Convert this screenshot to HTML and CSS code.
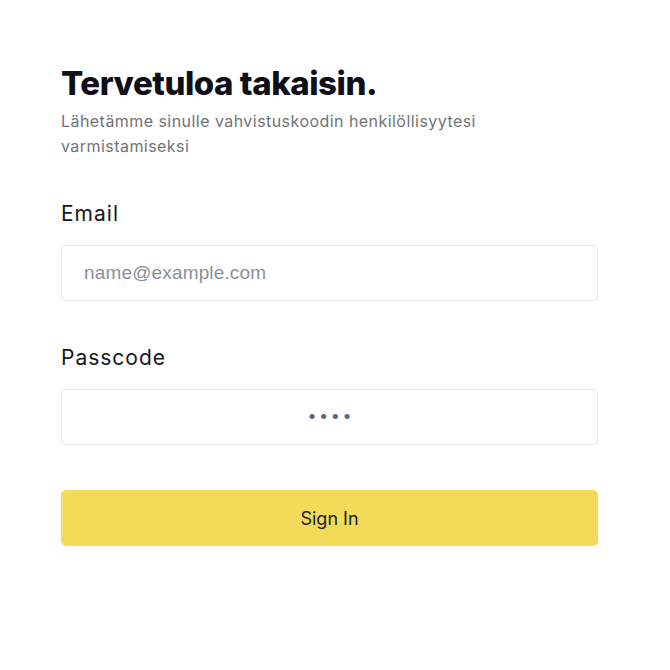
FILE: index.html
```html
<!DOCTYPE html>
<html lang="fi">
<head>
    <meta charset="UTF-8">
    <meta name="viewport" content="width=device-width, initial-scale=1.0">
    <title>Kirjaudu</title>
    <link rel="stylesheet" href="styles.css">
</head>
<body>

    <div class="container">
        <h1 class="title">Tervetuloa takaisin.</h1>
        <p class="subtitle">Lähetämme sinulle vahvistuskoodin henkilöllisyytesi varmistamiseksi</p>

        <form id="loginForm" class="login-form">
            <div class="form-group">
                <label for="email">Email</label>
                <input type="email" id="email" placeholder="name@example.com">
            </div>

            <div class="form-group">
                <label for="passcode">Passcode</label>
                <input type="password" id="passcode" class="passcode" value="1234">
            </div>

            <button type="submit">Sign In</button>
        </form>
    </div>

</body>
</html>
```

FILE: styles.css
```css
body {
    font-family: Inter, "Noto Sans", sans-serif;
    margin: 0;
    background-color: #fff;
    color: #16161d;
}
.container {
    width: 537px;
    padding: 63px 0 0 61px;
}
.title {
    font-size: 33px;
    font-weight: 800;
    letter-spacing: -0.45px;
    line-height: 40px;
    margin: 0;
    color: #0f0f17;
}
.subtitle {
    font-size: 16px;
    line-height: 25px;
    letter-spacing: 0.45px;
    color: #727276;
    margin: 6px 0 0 0;
    width: 450px;
}
.login-form {
    margin-top: 42px;
    display: flex;
    flex-direction: column;
    gap: 44px;
}
.form-group {
    display: flex;
    flex-direction: column;
}
label {
    font-size: 21px;
    line-height: 26px;
    letter-spacing: 1px;
    margin-bottom: 18px;
    color: #16161d;
}
input {
    box-sizing: border-box;
    height: 56px;
    width: 100%;
    padding: 0 22px;
    border: 1px solid #e6e6e8;
    border-radius: 4px;
    font-family: "Liberation Sans", Arial, sans-serif;
    font-size: 19px;
    letter-spacing: 0.15px;
    color: #16161d;
    outline: none;
}
input::placeholder {
    color: #8a8f98;
}
.passcode {
    text-align: center;
    color: #5c6579;
    letter-spacing: 5px;
    text-indent: 5px;
    font-size: 19px;
}
button {
    display: block;
    width: 100%;
    height: 56px;
    margin-top: 1px;
    background-color: #f3db5a;
    color: #1d1d1f;
    border: none;
    border-radius: 5px;
    font-family: Inter, "Noto Sans", sans-serif;
    font-size: 18px;
    cursor: pointer;
}
```
